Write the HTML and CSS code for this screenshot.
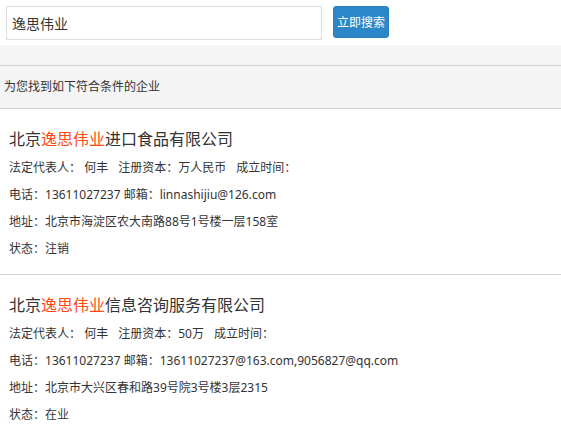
FILE: index.html
```html
<!DOCTYPE html>
<html lang="zh-CN">
<head>
<meta charset="utf-8">
<title>企业查询</title>
<link rel="stylesheet" href="styles.css">
</head>
<body>
<div class="search-bar">
  <input class="search-input" type="text" value="逸思伟业">
  <button class="search-btn">立即搜索</button>
</div>
<div class="result-head">
  <div class="result-tip">为您找到如下符合条件的企业</div>
</div>
<ul class="company-list">
  <li class="company">
    <div class="company-name">北京<em class="hl">逸思伟业</em>进口食品有限公司</div>
    <div class="row"><span class="field">法定代表人<span class="c">：</span> 何丰</span><span class="field">注册资本<span class="c">：</span>万人民币</span><span class="field">成立时间<span class="c">：</span></span></div>
    <div class="row">电话<span class="c">：</span>13611027237 邮箱<span class="c">：</span>linnashijiu@126.com</div>
    <div class="row">地址<span class="c">：</span>北京市海淀区农大南路88号1号楼一层158室</div>
    <div class="row">状态<span class="c">：</span>注销</div>
  </li>
  <li class="company">
    <div class="company-name">北京<em class="hl">逸思伟业</em>信息咨询服务有限公司</div>
    <div class="row"><span class="field">法定代表人<span class="c">：</span> 何丰</span><span class="field">注册资本<span class="c">：</span>50万</span><span class="field">成立时间<span class="c">：</span></span></div>
    <div class="row">电话<span class="c">：</span>13611027237 邮箱<span class="c">：</span>13611027237@163.com,9056827@qq.com</div>
    <div class="row">地址<span class="c">：</span>北京市大兴区春和路39号院3号楼3层2315</div>
    <div class="row">状态<span class="c">：</span>在业</div>
  </li>
</ul>
</body>
</html>
```

FILE: styles.css
```css
* { box-sizing: border-box; }
html, body {
  margin: 0;
  padding: 0;
  background: #fff;
  font-family: "Noto Sans", "Noto Sans CJK SC", sans-serif;
  color: #333;
}
.search-bar {
  display: flex;
  align-items: flex-start;
  gap: 11px;
  padding: 6px 6px 5px 6px;
  height: 45px;
}
.search-input {
  width: 316px;
  height: 34px;
  border: 1px solid #dcdcdc;
  padding: 0 5px;
  font-family: "Noto Sans", "Noto Sans CJK SC", sans-serif;
  font-size: 14px;
  color: #333;
  outline: none;
  background: #fff;
}
.search-btn {
  width: 56px;
  height: 32px;
  border: 1px solid #2a7fbf;
  border-radius: 3px;
  background: #2b87c8;
  color: #fff;
  font-family: "Noto Sans", "Noto Sans CJK SC", sans-serif;
  font-size: 12px;
  padding: 0;
}
.result-head {
  background: #f5f5f5;
  padding-top: 20px;
}
.result-tip {
  border-top: 1px solid #cfcfcf;
  border-bottom: 1px solid #cfcfcf;
  background: #f4f4f4;
  height: 44px;
  line-height: 42px;
  padding-left: 4px;
  font-size: 12px;
  color: #333;
}
.company-list {
  list-style: none;
  margin: 0;
  padding: 0;
}
.company {
  padding: 15px 9px 12px 9px;
  border-bottom: 1px solid #d4d4d4;
}
.company-name {
  font-size: 16px;
  line-height: 30px;
  color: #333;
}
.hl {
  font-style: normal;
  color: #ff4a14;
}
.row {
  font-size: 12px;
  line-height: 27px;
  color: #333;
}
.c {
  font-family: "Noto Sans CJK TC", sans-serif;
  line-height: 1;
}
.field { margin-right: 10px; }
```
